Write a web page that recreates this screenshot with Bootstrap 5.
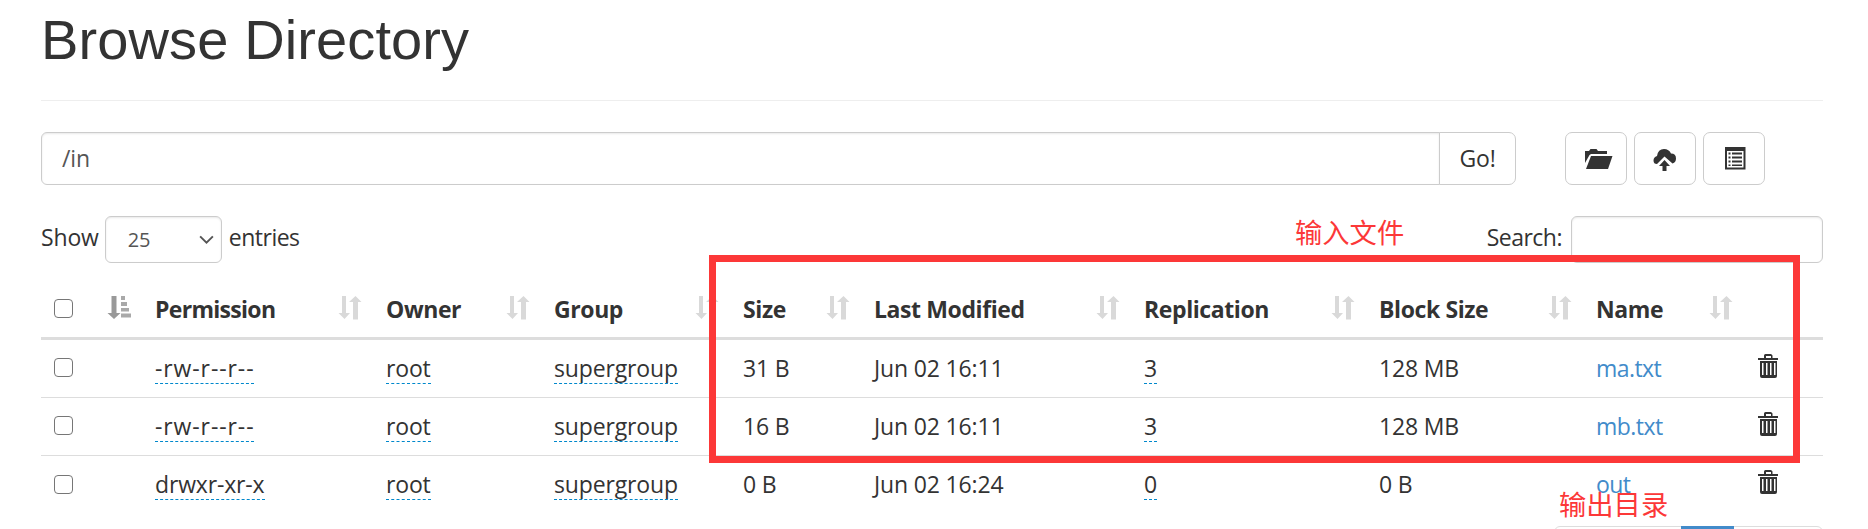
<!DOCTYPE html>
<html lang="en">
<head>
<meta charset="utf-8">
<meta name="viewport" content="width=device-width, initial-scale=1">
<title>Browse Directory</title>
<link rel="stylesheet" href="https://cdn.jsdelivr.net/npm/bootstrap@5.3.0/dist/css/bootstrap.min.css">
<script src="https://cdn.jsdelivr.net/npm/bootstrap@5.3.0/dist/js/bootstrap.bundle.min.js"></script>
<style>
body{font-family:"Open Sans","Noto Sans",sans-serif;font-size:23px;line-height:34px;letter-spacing:-.15px;color:#333;background:#fff;height:529px;overflow:hidden}
.page{width:1868px;height:529px;padding:0 45px 0 41px;overflow:hidden}
.page h1{font-family:"Liberation Sans",Arial,sans-serif;font-size:56px;line-height:62px;letter-spacing:.12px;font-weight:400;color:#333;padding-top:9px;height:101px;border-bottom:1px solid #eee;margin:0 0 31px}
.toolbar{height:53px;margin-bottom:31px}
.path-group{width:1475px;margin-right:49px}
.form-control,.form-select{font-size:inherit;letter-spacing:inherit;color:#555;border:1px solid #ccc;box-shadow:inset 0 1px 2px rgba(0,0,0,.09);border-radius:6px}
.path-group .form-control{padding:0 20px}
.btn-plain{--bs-btn-color:#333;--bs-btn-border-color:#ccc;--bs-btn-bg:#fff;--bs-btn-border-radius:7px;font-size:inherit;letter-spacing:inherit;padding:0;width:62px;height:53px;margin-right:7px;display:flex;align-items:center;justify-content:center}
.path-group .btn-plain{width:77px;margin-right:0}
.controls{height:47px}
.form-select{width:117px;height:47px;margin:0 7px 0 6px;padding:1px 0 0 22px;font-size:20px;background-size:17px 17px;background-position:right 6px center;background-image:url("data:image/svg+xml,%3Csvg xmlns='http://www.w3.org/2000/svg' viewBox='0 0 16 16'%3E%3Cpath fill='none' stroke='%23555' stroke-width='1.8' d='M2 5l6 6 6-6'/%3E%3C/svg%3E")}
.search-box{width:252px;height:47px;margin-left:9px}
.caption-text{height:42px;line-height:42px}
.tight{letter-spacing:-.5px}
.files{table-layout:fixed;border-collapse:separate;border-spacing:0;width:1782px;margin:0;color:#333;--bs-table-color:#333}
.files>:not(caption)>*>*{padding:0 14px;vertical-align:middle;border-bottom:1px solid #ddd}
.files>thead>tr>th{height:77px;padding-top:18px;border-bottom:3px solid #ddd;position:relative;letter-spacing:-.4px}
.files>thead>tr>th:nth-child(2){letter-spacing:-.7px}
.files>tbody>tr>td{height:58px;padding-bottom:2px}
.files>tbody>tr:last-child>td{border:0}
.files .form-check-input{display:block;width:19px;height:19px;margin:0 0 0 -1px;border:1.5px solid #767676;border-radius:4px}
.files>thead .form-check-input{margin-top:-2px}
.sorter{position:absolute;right:10px;top:33px;width:24px;height:24px;fill:#d9d9d9}
.edit{display:inline-block;line-height:27px;margin-top:1px;padding-bottom:1px;border-bottom:1px dashed #08c}
.perm-file{letter-spacing:.9px}
.files a{color:#428bca;text-decoration:none;letter-spacing:-.55px}
.trash{display:block;margin:-4px 0 0 1px}
.mark-box{left:709px;top:255px;width:1091px;height:208px;border:7px solid #fc3838}
.note{font:27.3px/34px "Noto Sans CJK SC",sans-serif;letter-spacing:0;color:#fc3838}
.note-in{left:1295px;top:214px}
.note-out{left:1559px;top:486px}
.pager{left:1554px;top:526px;width:269px;height:40px;border:1px solid #ddd;border-radius:6px}
.pager-active{margin:-1px 0 0 126px;width:53px;height:40px;background:#428bca}
</style>
</head>
<body>
<svg class="d-none" xmlns="http://www.w3.org/2000/svg">
<symbol id="both" viewBox="0 0 24 24"><path d="M4 0h4v17h4l-5.500 6-6-6H4zM15 23.500V6h-4l6.500-6 6 6h-3.500v17.500z"/></symbol>
<symbol id="asc" viewBox="0 0 24 24"><path fill="#999" d="M4.500 0h5v17h4L7 23 .5 17h4z"/><path fill="#a9a9a9" d="M14 0h4v4h-4zM14 6h6v4h-6zM14 12h8v3.500h-8zM14 17.500h10v4H14z"/></symbol>
<symbol id="bin" viewBox="0 0 21 24"><path fill="#333" fill-rule="evenodd" d="M6 4V1.500Q6 0 7.500 0h5Q14 0 14.500 1.500V4H20v2H0V4zm2 0h5V2H8zM2 7h17v15q0 2-2 2H4q-2 0-2-2zm2 2v12h1.500V9zm4 0v12h1.500V9zm4 0v12h1.500V9zm4 0v12h1.500V9z"/></symbol>
</svg>
<main class="page position-relative">
<h1>Browse Directory</h1>
<div class="toolbar d-flex">
<div class="input-group path-group"><input class="form-control" value="/in" aria-label="Directory"><button class="btn btn-plain">Go!</button></div>
<button class="btn btn-plain" aria-label="Create directory"><svg width="28" height="22" viewBox="0 0 28 22" fill="#333" style="margin-left:6px"><path d="M0 15V3h4l1.500-2h6L13 3h9v3H6L4.500 7z"/><path d="M6 8h21.500L23 21H1z"/></svg></button>
<button class="btn btn-plain" aria-label="Upload files"><svg width="24" height="24" viewBox="0 0 24 24" fill="#333" style="margin-top:2px"><path d="M11.500 8.500l8 7q3.500-1 3.500-5 0-5-5-5Q16 1 11 1 5 1 4 8 .5 9 .5 12.500T4 16z"/><path d="M11.500 12l5.500 6h-3.500v5h-4v-5H6z"/></svg></button>
<button class="btn btn-plain" aria-label="Cut and paste"><svg width="21" height="23" viewBox="0 0 21 23" style="margin-left:2px"><path fill="#333" fill-rule="evenodd" d="M0 0h20.500v22.500H0zM2 4v16.500h16.500V4z"/><path fill="#333" d="M3.500 5.500h2v2h-2zm3.500 0h10v2H7zM3.500 9.500h2v2h-2zm3.500 0h10v2H7zm-3.500 4h2v2h-2zm3.500 0h10v2H7zm-3.500 4h2v1.500h-2zm3.500 0h10v1.500H7z"/></svg></button>
</div>
<div class="controls d-flex">
<span class="caption-text">Show</span><select class="form-select" aria-label="Entries"><option>25</option></select><span class="caption-text tight">entries</span>
<label class="caption-text tight ms-auto" for="q">Search:</label><input id="q" class="form-control search-box">
</div>
<table class="table files">
<colgroup><col style="width:100px"><col style="width:231px"><col style="width:168px"><col style="width:189px"><col style="width:131px"><col style="width:270px"><col style="width:235px"><col style="width:217px"><col style="width:161px"><col style="width:80px"></colgroup>
<thead><tr>
<th><input type="checkbox" class="form-check-input"><svg class="sorter"><use href="#asc"/></svg></th>
<th>Permission<svg class="sorter"><use href="#both"/></svg></th>
<th>Owner<svg class="sorter"><use href="#both"/></svg></th>
<th>Group<svg class="sorter"><use href="#both"/></svg></th>
<th>Size<svg class="sorter"><use href="#both"/></svg></th>
<th>Last Modified<svg class="sorter"><use href="#both"/></svg></th>
<th>Replication<svg class="sorter"><use href="#both"/></svg></th>
<th>Block Size<svg class="sorter"><use href="#both"/></svg></th>
<th>Name<svg class="sorter"><use href="#both"/></svg></th>
<th></th>
</tr></thead>
<tbody>
<tr><td><input type="checkbox" class="form-check-input"></td><td><span class="edit perm-file">-rw-r--r--</span></td><td><span class="edit">root</span></td><td><span class="edit">supergroup</span></td><td>31 B</td><td>Jun 02 16:11</td><td><span class="edit">3</span></td><td>128 MB</td><td><a href="#">ma.txt</a></td><td><svg class="trash" width="21" height="24"><use href="#bin"/></svg></td></tr>
<tr><td><input type="checkbox" class="form-check-input"></td><td><span class="edit perm-file">-rw-r--r--</span></td><td><span class="edit">root</span></td><td><span class="edit">supergroup</span></td><td>16 B</td><td>Jun 02 16:11</td><td><span class="edit">3</span></td><td>128 MB</td><td><a href="#">mb.txt</a></td><td><svg class="trash" width="21" height="24"><use href="#bin"/></svg></td></tr>
<tr><td><input type="checkbox" class="form-check-input"></td><td><span class="edit">drwxr-xr-x</span></td><td><span class="edit">root</span></td><td><span class="edit">supergroup</span></td><td>0 B</td><td>Jun 02 16:24</td><td><span class="edit">0</span></td><td>0 B</td><td><a href="#">out</a></td><td><svg class="trash" width="21" height="24"><use href="#bin"/></svg></td></tr>
</tbody>
</table>
<div class="pager position-absolute"><div class="pager-active"></div></div>
<div class="mark-box position-absolute"></div>
<div class="note note-in position-absolute">输入文件</div>
<div class="note note-out position-absolute">输出目录</div>
</main>
</body>
</html>
